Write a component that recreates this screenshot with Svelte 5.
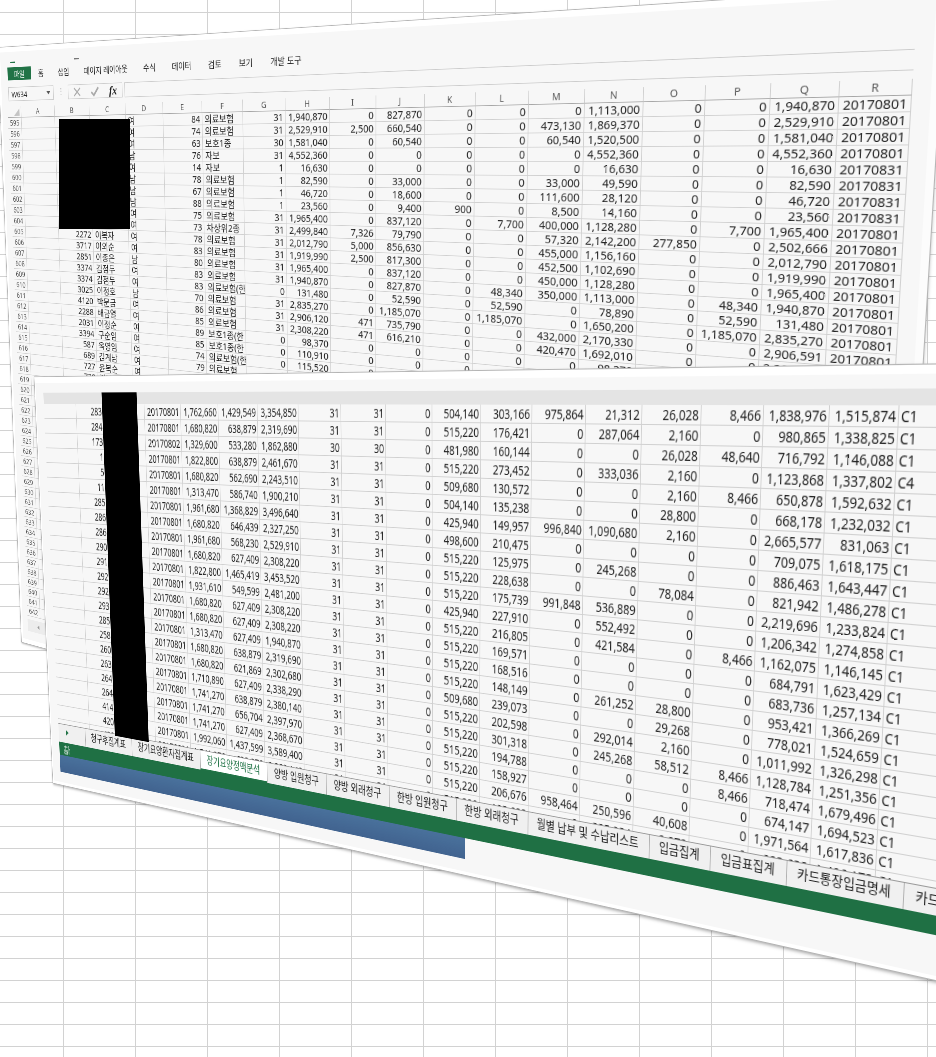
<script>
  const COL = 72;
  const BACK_ROW = 18;
  const FRONT_ROW = 20;

  // Projective transform that carries four sheet points onto four page points.
  function project(pairs) {
    const m = [];
    for (const [[x, y], [X, Y]] of pairs) {
      m.push([x, y, 1, 0, 0, 0, -x * X, -y * X, X]);
      m.push([0, 0, 0, x, y, 1, -x * Y, -y * Y, Y]);
    }
    for (let i = 0; i < 8; i++) {
      let p = i;
      for (let r = i + 1; r < 8; r++) if (Math.abs(m[r][i]) > Math.abs(m[p][i])) p = r;
      [m[i], m[p]] = [m[p], m[i]];
      for (let r = 0; r < 8; r++) {
        if (r === i) continue;
        const f = m[r][i] / m[i][i];
        for (let c = i; c < 9; c++) m[r][c] -= f * m[i][c];
      }
    }
    const [a, b, c, d, e, f, g, h] = m.map((row, i) => row[8] / row[i]);
    return `matrix3d(${[a, d, 0, g, b, e, 0, h, 0, 0, 1, 0, c, f, 0, 1].join(',')})`;
  }

  const cell = (left, top, rowHeight) => (u, v) => [left + u * COL, top + v * rowHeight];
  const back = cell(46, 115, BACK_ROW);
  const front = cell(19, 36, FRONT_ROW);

  const backTransform = project([
    [back(0, 0), [21.5, 117.5]],
    [back(18, 0), [912, 95.5]],
    [back(18, 16), [896.7, 355.5]],
    [back(0, 47), [40, 609]]
  ]);
  const frontTransform = project([
    [front(0, 1), [44.5, 418.7]],
    [front(0, 21), [57.5, 705]],
    [front(18, 0.5), [899, 416.5]],
    [front(18, 21.5), [876.5, 860.5]]
  ]);

  const menus = ['홈', '삽입', '페이지 레이아웃', '수식', '데이터', '검토', '보기', '개발 도구'];
  const letters = 'ABCDEFGHIJKLMNOPQR'.split('');

  const backData = `
_|_|_|여|84|의료보험|31|1,940,870|0|827,870|0|0|0|1,113,000|0|0|1,940,870|20170801
_|_|_|여|74|의료보험|31|2,529,910|2,500|660,540|0|0|473,130|1,869,370|0|0|2,529,910|20170801
_|_|_|여|63|보호1종|30|1,581,040|0|60,540|0|0|60,540|1,520,500|0|0|1,581,040|20170801
_|_|_|남|76|자보|31|4,552,360|0|0|0|0|0|4,552,360|0|0|4,552,360|20170801
_|_|_|여|14|자보|1|16,630|0|0|0|0|0|16,630|0|0|16,630|20170831
_|_|_|남|78|의료보험|1|82,590|0|33,000|0|0|33,000|49,590|0|0|82,590|20170831
_|_|_|남|67|의료보험|1|46,720|0|18,600|0|0|111,600|28,120|0|0|46,720|20170831
_|_|_|남|88|의료보험|1|23,560|0|9,400|900|0|8,500|14,160|0|0|23,560|20170831
_|_|_|여|75|의료보험|31|1,965,400|0|837,120|0|7,700|400,000|1,128,280|0|7,700|1,965,400|20170801
_|_|_|여|73|차상위2종|31|2,499,840|7,326|79,790|0|0|57,320|2,142,200|277,850|0|2,502,666|20170801
_|2272|이복자|여|78|의료보험|31|2,012,790|5,000|856,630|0|0|455,000|1,156,160|0|0|2,012,790|20170801
_|3717|이외순|여|83|의료보험|31|1,919,990|2,500|817,300|0|0|452,500|1,102,690|0|0|1,919,990|20170801
_|2851|이종은|남|80|의료보험|31|1,965,400|0|837,120|0|0|450,000|1,128,280|0|0|1,965,400|20170801
_|3374|김점두|여|83|의료보험|31|1,940,870|0|827,870|0|48,340|350,000|1,113,000|0|48,340|1,940,870|20170801
_|3374|김점두|여|83|의료보험(한|0|131,480|0|52,590|0|52,590|0|78,890|0|52,590|131,480|20170801
_|3025|이정호|남|70|의료보험|31|2,835,270|0|1,185,070|0|1,185,070|0|1,650,200|0|1,185,070|2,835,270|20170801
_|4120|박문금|여|86|의료보험|31|2,906,120|471|735,790|0|0|432,000|2,170,330|0|0|2,906,591|20170801
_|2288|배금열|여|85|의료보험|31|2,308,220|471|616,210|0|0|420,470|1,692,010|0|0|2,308,691|20170801
_|2031|이정순|여|89|보호1종(한|0|98,370|0|0|0|0|0|98,370|0|0|98,370|20170801
_|3394|구순임|여|85|보호1종(한|0|110,910|0|0|0|0|0|110,910
_|587|옥영임|여|74|의료보험(한|0|115,520|0|0|0|0|0
_|689|김계남|여|79|의료보험|0|98,370|0|0|0
_|727|윤복순|여|82|의료보험|0|98,370
_|728|김복순|여`;
  const filled = backData.trim().split('\n').map((r) => r.split('|').map((c) => (c === '_' ? '' : c)));
  const backRows = Array.from({ length: 48 }, (_, i) => ({
    number: 595 + i,
    cells: letters.map((_, c) => filled[i]?.[c] ?? '')
  }));

  const frontData = `
283|20170801|1,762,660|1,429,549|3,354,850|31|31|0|504,140|303,166|975,864|21,312|26,028|8,466|1,838,976|1,515,874|C1
284|20170801|1,680,820|638,879|2,319,690|31|31|0|515,220|176,421|0|287,064|2,160|0|980,865|1,338,825|C1
173|20170802|1,329,600|533,280|1,862,880|30|30|0|481,980|160,144|0|0|26,028|48,640|716,792|1,146,088|C1
1|20170801|1,822,800|638,879|2,461,670|31|31|0|515,220|273,452|0|333,036|2,160|0|1,123,868|1,337,802|C4
5|20170801|1,680,820|562,690|2,243,510|31|31|0|509,680|130,572|0|0|2,160|8,466|650,878|1,592,632|C1
11|20170801|1,313,470|586,740|1,900,210|31|31|0|504,140|135,238|0|0|28,800|0|668,178|1,232,032|C1
285|20170801|1,961,680|1,368,829|3,496,640|31|31|0|425,940|149,957|996,840|1,090,680|2,160|0|2,665,577|831,063|C1
286|20170801|1,680,820|646,439|2,327,250|31|31|0|498,600|210,475|0|0|0|0|709,075|1,618,175|C1
286|20170801|1,961,680|568,230|2,529,910|31|31|0|515,220|125,975|0|245,268|0|0|886,463|1,643,447|C1
290|20170801|1,680,820|627,409|2,308,220|31|31|0|515,220|228,638|0|0|78,084|0|821,942|1,486,278|C1
291|20170801|1,822,800|1,465,419|3,453,520|31|31|0|515,220|175,739|991,848|536,889|0|0|2,219,696|1,233,824|C1
292|20170801|1,931,610|549,599|2,481,200|31|31|0|425,940|227,910|0|552,492|0|0|1,206,342|1,274,858|C1
292|20170801|1,680,820|627,409|2,308,220|31|31|0|515,220|216,805|0|421,584|0|8,466|1,162,075|1,146,145|C1
293|20170801|1,680,820|627,409|2,308,220|31|31|0|515,220|169,571|0|0|0|0|684,791|1,623,429|C1
285|20170801|1,313,470|627,409|1,940,870|31|31|0|515,220|168,516|0|0|0|0|683,736|1,257,134|C1
258|20170801|1,680,820|638,879|2,319,690|31|31|0|515,220|148,149|0|261,252|28,800|0|953,421|1,366,269|C1
260|20170801|1,680,820|621,869|2,302,680|31|31|0|509,680|239,073|0|0|29,268|0|778,021|1,524,659|C1
263|20170801|1,710,890|627,409|2,338,290|31|31|0|515,220|202,598|0|292,014|2,160|0|1,011,992|1,326,298|C1
264|20170801|1,741,270|638,879|2,380,140|31|31|0|515,220|301,318|0|245,268|58,512|8,466|1,128,784|1,251,356|C1
264|20170801|1,741,270|656,704|2,397,970|31|31|0|515,220|194,788|0|0|0|8,466|718,474|1,679,496|C1
414|20170801|1,741,270|627,409|2,368,670|31|31|0|515,220|158,927|0|0|0|0|674,147|1,694,523|C1
420|20170801|1,992,060|1,437,599|3,589,400|31|31|0|515,220|206,676|958,464|250,596|40,608|0|1,971,564|1,617,836|C1
420|20170801|1,741,270|638,879|2,380,140|31|31|0|515,220|198,688|0|225,084|2,272|0|923,638|1,406,173|C1`;
  const frontRows = frontData.trim().split('\n').map((r) => {
    const [id, ...rest] = r.split('|');
    return ['', id, '', ...rest, ''];
  });

  const sheets = [
    '청구후집계표', '장기요양환자집계표', '장기요양정액분석', '양방 입원청구', '양방 외래청구',
    '한방 입원청구', '한방 외래청구', '월별 납부 및 수납리스트', '입금집계', '입금표집계',
    '카드통장입금명세', '카드통장'
  ];
  let active = $state('장기요양정액분석');
</script>

<main>
  <section class="window back" style:transform={backTransform}>
    <div class="quick"><i class="save"></i><i class="more"></i></div>
    <nav class="ribbon">
      <button class="file">파일</button>
      {#each menus as menu}
        <button>{menu}</button>
      {/each}
    </nav>
    <div class="formula">
      <div class="namebox">
        <input aria-label="이름 상자" value="W634" />
        <svg viewBox="0 0 8 5" width="8" height="5"><path d="M0 0h8L4 5z" fill="#555" /></svg>
      </div>
      <span class="grip">⋮</span>
      <div class="edit">
        <button aria-label="취소"><svg viewBox="0 0 16 16" width="16" height="16"><path d="M2 2l12 12M14 2L2 14" stroke="#a9a9a9" stroke-width="2" fill="none" /></svg></button>
        <button aria-label="입력"><svg viewBox="0 0 18 16" width="18" height="16"><path d="M2 9l5 5L16 2" stroke="#a9a9a9" stroke-width="3" fill="none" /></svg></button>
        <button class="fx">fx</button>
      </div>
      <input class="bar" aria-label="수식 입력줄" />
    </div>
    <table class="sheet">
      <colgroup><col class="rowhead" />{#each letters as _}<col />{/each}</colgroup>
      <thead>
        <tr>
          <th><svg class="corner" viewBox="0 0 12 12" width="12" height="12"><path d="M12 0v12H0z" fill="#c4c4c4" /></svg></th>
          {#each letters as letter}<th>{letter}</th>{/each}
        </tr>
      </thead>
      <tbody>
        {#each backRows as row}
          <tr>
            <th>{row.number}</th>
            {#each row.cells as value, c}<td class:text={c === 2 || c === 3 || c === 5} class:clip={c === 5}>{value}</td>{/each}
          </tr>
        {/each}
      </tbody>
    </table>
    <div class="scroll"><svg viewBox="0 0 5 8" width="5" height="8"><path d="M5 0v8L0 4z" fill="#999" /></svg></div>
  </section>
  <div class="mask"></div>

  <section class="window front" style:transform={frontTransform}>
    <div class="band"></div>
    <div class="grid">
      <table class="sheet">
        <colgroup>{#each frontRows[0] as _}<col />{/each}</colgroup>
        <tbody>
          {#each frontRows as row}
            <tr>
              {#each row as value, c}<td class:id={c === 1} class:text={c === 18}>{value}</td>{/each}
            </tr>
          {/each}
        </tbody>
      </table>
    </div>
    <div class="tabs">
      <span class="next"><svg viewBox="0 0 6 8" width="6" height="8"><path d="M0 0v8l6-4z" fill="#217346" /></svg></span>
      {#each sheets as sheet}
        <button class:active={sheet === active} onclick={() => (active = sheet)}>{sheet}</button>
      {/each}
    </div>
    <div class="status">
      <svg viewBox="0 0 16 14" width="16" height="14"><path d="M1 3h8M5 1v6M1 8h8M2 10h7v3H2zM12 1v12M12 6h3" stroke="#fff" stroke-width="1" fill="none" /></svg>
    </div>
    <div class="task"></div>
    <div class="cover"></div>
  </section>
</main>

<style>
  :global(body) {
    margin: 0;
    background: #fff;
  }
  main {
    position: relative;
    min-height: 100vh;
    overflow: hidden;
    background: 63px 12px / 72px 22px
      linear-gradient(to right, #d2d2d2 1px, transparent 1px),
      63px 12px / 72px 22px linear-gradient(#d2d2d2 1px, transparent 1px);
    font: 14px/18px 'Noto Sans', 'Noto Sans CJK KR', sans-serif;
    color: #222;
  }
  button,
  input {
    margin: 0;
    padding: 0;
    border: 0;
    background: none;
    font: inherit;
    color: inherit;
  }
  .window {
    position: absolute;
    left: 0;
    top: 0;
    box-sizing: border-box;
    transform-origin: 0 0;
    background: #f7f7f7;
    box-shadow: 0 0 0 1px #b4b4b4, 0 2px 4px #0006;
    display: flex;
    flex-direction: column;
  }
  .back {
    width: 1368px;
    height: 1031px;
    padding: 16px 18px 0 12px;
    border: solid #fff;
    border-width: 8px 8px 8px 4px;
    border-right-color: #fcfcfc;
  }
  .quick {
    display: flex;
    gap: 126px;
    height: 9px;
    padding: 0 10px;
  }
  .quick i {
    width: 10px;
    height: 2px;
    background: #777;
  }
  .quick .save {
    background: #217346;
  }
  .ribbon {
    display: flex;
    height: 21px;
    padding-left: 3px;
    font-size: 13px;
  }
  .ribbon button {
    padding: 0 15px;
    white-space: nowrap;
  }
  .ribbon .file {
    width: 51px;
    padding: 0;
    background: #217346;
    color: #fff;
  }
  .formula {
    display: flex;
    height: 23px;
    margin: 11px 0 9px 3px;
    font-size: 13px;
  }
  .namebox,
  .edit,
  .bar {
    box-sizing: border-box;
    border: 1px solid #ccc;
  }
  .namebox {
    display: flex;
    align-items: center;
    width: 98px;
    padding: 0 6px;
  }
  .namebox input {
    flex: 1;
    min-width: 0;
  }
  .grip {
    width: 30px;
    text-align: center;
    color: #999;
  }
  .edit {
    display: flex;
    align-items: center;
    justify-content: space-around;
    width: 110px;
  }
  .edit svg {
    display: block;
  }
  .fx {
    font: italic bold 19px/20px 'Liberation Serif', serif;
  }
  .bar {
    flex: 1;
    margin-left: 4px;
    border-right: 0;
  }
  .sheet {
    table-layout: fixed;
    border-collapse: separate;
    border-spacing: 0;
    width: 0;
  }
  .sheet col {
    width: 72px;
  }
  .sheet .rowhead {
    width: 30px;
  }
  .sheet th,
  .sheet td {
    box-sizing: border-box;
    height: 18px;
    padding: 0 3px 0 0;
    border: solid #d0d0d0;
    border-width: 0 1px 1px 0;
    white-space: nowrap;
    text-align: right;
    line-height: 17px;
  }
  .sheet th {
    padding: 0;
    font-weight: 400;
    font-size: 12px;
    text-align: center;
    color: #555;
  }
  .sheet thead th {
    border-bottom-color: #a6a6a6;
  }
  .sheet .text {
    padding: 0 0 0 4px;
    text-align: left;
  }
  .sheet .clip {
    overflow: hidden;
  }
  .corner {
    display: block;
    margin-left: 14px;
  }
  .scroll {
    display: flex;
    align-items: center;
    justify-content: center;
    width: 48px;
    height: 22px;
    margin-top: 6px;
    background: #ececec;
  }
  .mask {
    position: absolute;
    left: 59px;
    top: 119px;
    width: 71px;
    height: 110px;
    background: #000;
  }
  .front {
    width: 1563px;
    height: 572px;
    padding: 13px 0 0 17px;
    border: solid #fff;
    border-width: 8px 2px 4px;
  }
  .band {
    flex: none;
    height: 15px;
    background: #e4e4e4;
  }
  .grid {
    flex: none;
    height: 446px;
    overflow: hidden;
  }
  .cover {
    position: absolute;
    left: 145px;
    top: 13px;
    width: 73px;
    height: 464px;
    background: #000;
  }
  .grid td {
    height: 20px;
    padding-right: 2px;
    line-height: 19px;
  }
  .grid .text {
    padding-left: 2px;
  }
  .grid .id {
    padding-right: 16px;
  }
  .tabs {
    display: flex;
    box-sizing: border-box;
    height: 27px;
    border-top: 1px solid #999;
    background: #f0f0f0;
  }
  .tabs button {
    flex: none;
    padding: 0 13px 5px 12px;
    border-left: 1px solid #b0b0b0;
    white-space: nowrap;
  }
  .tabs .active {
    padding-bottom: 3px;
    border-bottom: 2px solid #217346;
    background: #fff;
    color: #217346;
  }
  .next {
    box-sizing: border-box;
    width: 61px;
    padding-left: 17px;
    line-height: 20px;
  }
  .status {
    display: flex;
    align-items: center;
    height: 19px;
    padding-left: 10px;
    background: #1f7044;
  }
  .task {
    width: 770px;
    height: 25px;
    background: linear-gradient(#49719c, #41638f);
  }
</style>
